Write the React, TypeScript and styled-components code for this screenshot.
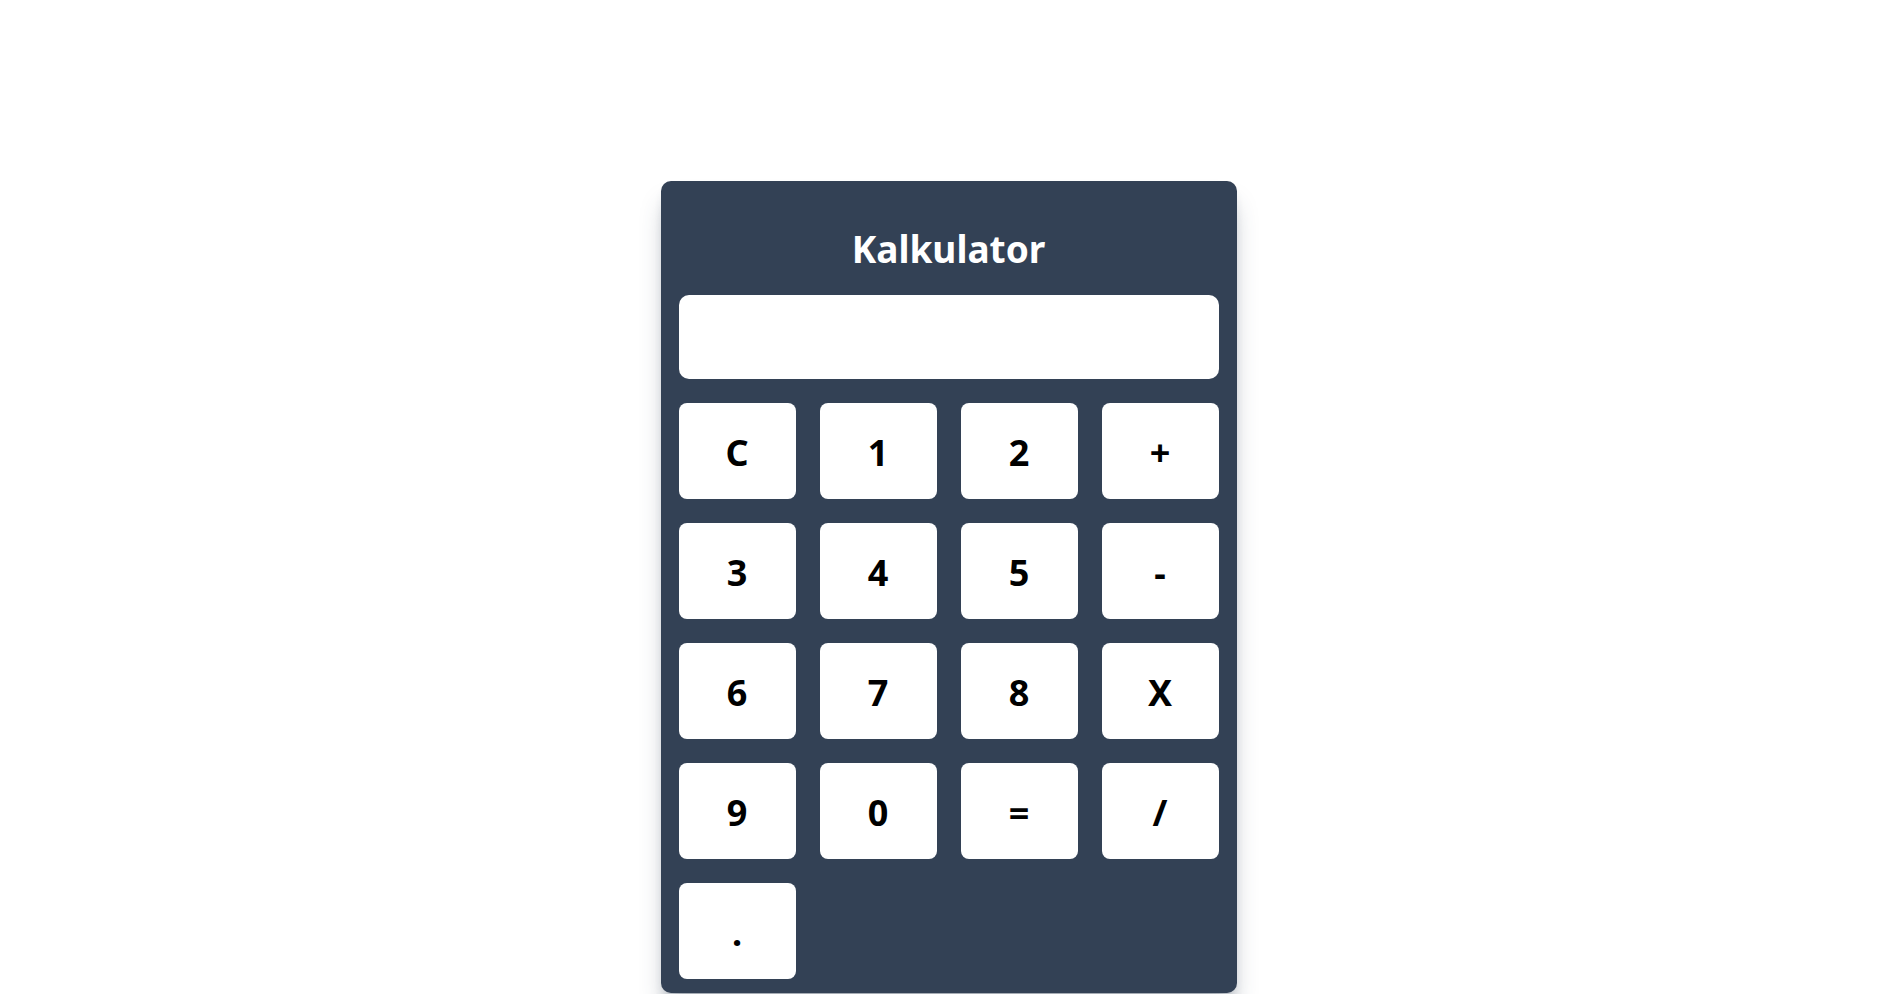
import React, { useState } from "react";
import styled, { createGlobalStyle } from "styled-components";

const GlobalStyle = createGlobalStyle`
  html, body {
    margin: 0;
    padding: 0;
    background: #ffffff;
    font-family: "Noto Sans", "Open Sans", Arial, sans-serif;
  }
  * { box-sizing: border-box; }
`;

const Page = styled.main`
  display: flex;
  justify-content: center;
  align-items: flex-start;
  padding: 181px 0 0 4px;
  min-height: 100vh;
`;

const Card = styled.section`
  width: 576px;
  background: #334155;
  border-radius: 10px;
  padding: 0 18px 14px 18px;
  display: flex;
  flex-direction: column;
  box-shadow: 0 20px 25px -5px rgba(51, 65, 85, 0.35),
    0 8px 12px -6px rgba(51, 65, 85, 0.3);
`;

const Title = styled.h1`
  margin: 48px 0 26px;
  font-size: 37px;
  line-height: 40px;
  font-weight: 700;
  color: #ffffff;
  text-align: center;
`;

const Display = styled.input`
  width: 100%;
  height: 84px;
  border: none;
  outline: none;
  border-radius: 10px;
  background: #ffffff;
  padding: 0 16px;
  font-family: inherit;
  font-size: 36px;
  font-weight: 700;
  text-align: right;
  color: #000000;
  margin-bottom: 24px;
`;

const Keypad = styled.div`
  display: grid;
  grid-template-columns: repeat(4, 1fr);
  gap: 24px;
`;

const Key = styled.button`
  height: 96px;
  border: none;
  border-radius: 8px;
  background: #ffffff;
  color: #000000;
  font-family: "Noto Sans", "Open Sans", Arial, sans-serif;
  font-size: 36px;
  font-weight: 700;
  line-height: 1;
  padding: 4px 0 0;
  cursor: pointer;
  display: flex;
  align-items: center;
  justify-content: center;
`;

const keys = ["C", "1", "2", "+", "3", "4", "5", "-", "6", "7", "8", "X", "9", "0", "=", "/", "."];

export default function App() {
  const [value, setValue] = useState("");

  const press = (k: string) => {
    if (k === "C") {
      setValue("");
      return;
    }
    if (k === "=") {
      try {
        const expr = value.replace(/X/g, "*");
        // eslint-disable-next-line no-new-func
        const result = Function(`"use strict"; return (${expr || "0"})`)();
        setValue(String(result));
      } catch {
        setValue("Error");
      }
      return;
    }
    setValue((v) => v + k);
  };

  return (
    <>
      <GlobalStyle />
      <Page>
        <Card>
          <Title>Kalkulator</Title>
          <Display readOnly value={value} />
          <Keypad>
            {keys.map((k) => (
              <Key key={k} onClick={() => press(k)}>
                {k}
              </Key>
            ))}
          </Keypad>
        </Card>
      </Page>
    </>
  );
}
